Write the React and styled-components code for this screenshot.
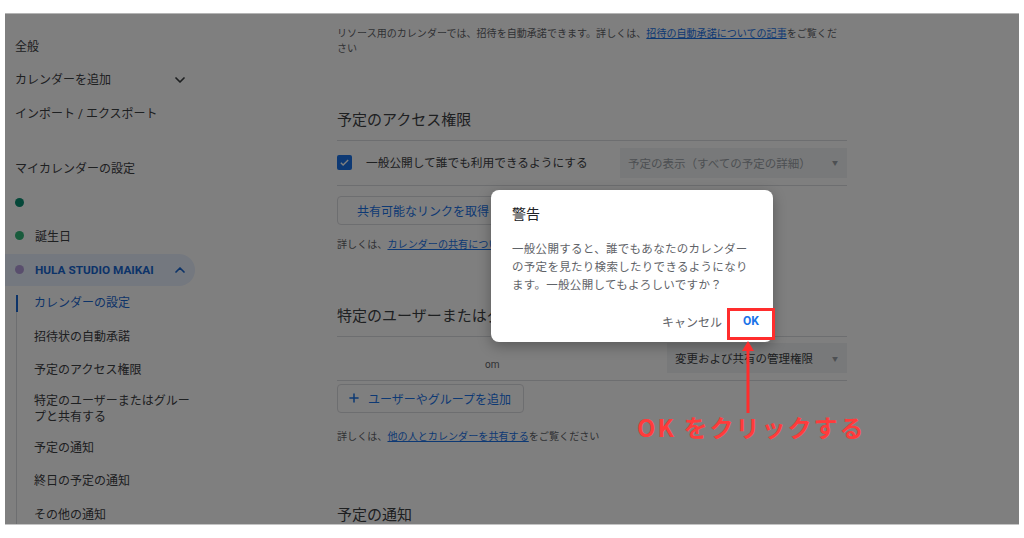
import React from "react";
import styled, { createGlobalStyle } from "styled-components";
import { ChevronDown, ChevronUp, Plus } from "lucide-react";

const GlobalStyle = createGlobalStyle`
  html, body { margin: 0; padding: 0; background: #fff; }
  body { font-family: Roboto, "Noto Sans CJK JP", sans-serif; }
`;

const Page = styled.div`
  padding: 13px 5px 13px 5px;
  background: #fff;
`;

const Screen = styled.div`
  position: relative;
  width: 1014px;
  height: 510px;
  overflow: hidden;
  background: #fff;
  display: flex;
  border-top: 1px solid #b4b4b4;
  border-bottom: 1px solid #c4c4c4;
`;

// ---------- sidebar ----------
const Sidebar = styled.nav`
  width: 332px;
  flex: none;
  padding-top: 16px;
  box-sizing: border-box;
  color: #3c4043;
  font-size: 12px;
`;

const NavItem = styled.div`
  width: 190px;
  height: 33.5px;
  box-sizing: border-box;
  display: flex;
  align-items: center;
  justify-content: space-between;
  padding: 0 7px 0 10px;
  margin-top: ${(p) => p.$mt || 0}px;
  line-height: 16px;
`;

const CalRow = styled.div`
  width: 190px;
  height: ${(p) => (p.$active ? "32px" : "33.5px")};
  margin: ${(p) => (p.$active ? "1px 0" : "0")};
  box-sizing: border-box;
  display: flex;
  align-items: center;
  gap: 11px;
  padding: 0 7px 0 10px;
  border-radius: 0 16px 16px 0;
  background: ${(p) => (p.$active ? "#e8f0fe" : "transparent")};
  color: ${(p) => (p.$active ? "#1967d2" : "#3c4043")};
  font-weight: ${(p) => (p.$active ? 700 : 400)};
  font-size: ${(p) => (p.$active ? "11.8px" : "12px")};
`;

const Dot = styled.span`
  width: 9px;
  height: 9px;
  border-radius: 50%;
  flex: none;
  background: ${(p) => p.$color};
`;

const CalName = styled.span`
  flex: 1;
`;

const SubList = styled.div`
  position: relative;
  margin-left: 11px;
  &::before {
    content: "";
    position: absolute;
    left: 0;
    top: 9px;
    bottom: 0;
    width: 1px;
    background: #dadce0;
  }
`;

const SubItem = styled.div`
  position: relative;
  min-height: 33.5px;
  box-sizing: border-box;
  display: flex;
  align-items: center;
  padding: 6px 0 6px 18px;
  line-height: 16px;
  color: ${(p) => (p.$active ? "#1967d2" : "#3c4043")};
  &::before {
    content: "";
    display: ${(p) => (p.$active ? "block" : "none")};
    position: absolute;
    left: -0.5px;
    top: 8px;
    bottom: 8px;
    width: 2px;
    background: #1967d2;
  }
`;

// ---------- main ----------
const Main = styled.main`
  width: 510px;
  flex: none;
  padding-top: 12px;
  color: #3c4043;
  font-size: 12px;
`;

const Note = styled.p`
  margin: ${(p) => p.$mt || 0}px 0 0;
  font-size: ${(p) => p.$size || 10.05}px;
  line-height: 15px;
  color: #5f6368;
  white-space: nowrap;
`;

const Link = styled.a`
  color: #1a73e8;
  text-decoration: underline;
`;

const SectionTitle = styled.h2`
  margin: ${(p) => p.$mt}px 0 0;
  padding-bottom: 10px;
  border-bottom: 1px solid #dadce0;
  font-size: 15px;
  font-weight: 400;
  line-height: 20px;
  color: #3c4043;
`;

const Row = styled.div`
  height: ${(p) => p.$h}px;
  display: flex;
  align-items: center;
  border-bottom: 1px solid #dadce0;
`;

const Checkbox = styled.span`
  width: 15px;
  height: 15px;
  border-radius: 2px;
  background: #1a73e8;
  display: flex;
  align-items: center;
  justify-content: center;
  flex: none;
`;

const CheckLabel = styled.span`
  margin-left: 14px;
  font-size: 11.7px;
  line-height: 16px;
  color: #3c4043;
`;

const Select = styled.div`
  margin-left: auto;
  width: ${(p) => p.$w}px;
  height: 30px;
  box-sizing: border-box;
  display: flex;
  align-items: center;
  justify-content: space-between;
  padding: 0 9px 0 8px;
  background: #f1f3f4;
  font-size: 11.5px;
  color: ${(p) => (p.$disabled ? "#9aa0a6" : "#3c4043")};
`;

const Caret = styled.span`
  font-size: 6px;
  color: #9aa0a6;
`;

const UserInfo = styled.div`
  padding-left: 148px;
  font-size: 10px;
  line-height: 14px;
  color: #5f6368;
  display: flex;
  flex-direction: column;
`;

const OutlineButton = styled.button`
  margin-top: ${(p) => p.$mt}px;
  height: 29px;
  display: flex;
  align-items: center;
  gap: 7px;
  padding: ${(p) => (p.$icon ? "0 12px 0 9px" : "0 19px")};
  background: #fff;
  border: 1px solid #dadce0;
  border-radius: 4px;
  color: #1a73e8;
  font-family: Roboto, "Noto Sans CJK JP", sans-serif;
  font-size: 12px;
`;

// ---------- overlay / dialog ----------
const Scrim = styled.div`
  position: absolute;
  inset: 0;
  background: rgba(0, 0, 0, 0.5);
`;

const Dialog = styled.div`
  position: absolute;
  left: 486px;
  top: 176px;
  width: 282px;
  height: 152px;
  box-sizing: border-box;
  padding: 14px 6px 0 21px;
  background: #fff;
  border-radius: 8px;
  box-shadow: 0 4px 14px rgba(0, 0, 0, 0.3);
`;

const DialogTitle = styled.div`
  font-size: 14px;
  line-height: 20px;
  color: #202124;
`;

const DialogBody = styled.div`
  margin-top: 16px;
  font-size: 11.5px;
  letter-spacing: 0.3px;
  line-height: 18px;
  color: #5f6368;
  white-space: nowrap;
`;

const DialogActions = styled.div`
  margin-top: 12px;
  display: flex;
  justify-content: flex-end;
  gap: 5px;
`;

const TextButton = styled.button`
  height: 30px;
  padding: 0 8px;
  border: none;
  background: transparent;
  font-family: Roboto, "Noto Sans CJK JP", sans-serif;
  font-size: 12px;
  font-weight: ${(p) => (p.$primary ? 700 : 400)};
  color: ${(p) => (p.$primary ? "#1a73e8" : "#5f6368")};
`;

// ---------- annotation ----------
const Highlight = styled.div`
  position: absolute;
  left: 722px;
  top: 294px;
  width: 48px;
  height: 32px;
  box-sizing: border-box;
  border: 3px solid #ff2d2d;
`;

const ArrowWrap = styled.svg`
  position: absolute;
  left: 737px;
  top: 327px;
`;

const Callout = styled.div`
  position: absolute;
  left: 632px;
  top: 398px;
  font-family: "Noto Sans CJK JP", sans-serif;
  font-size: 24px;
  font-weight: 700;
  letter-spacing: 2px;
  line-height: 30px;
  color: #ff3b3b;
  white-space: nowrap;
`;

const subItems = [
  { label: "カレンダーの設定", active: true },
  { label: "招待状の自動承諾" },
  { label: "予定のアクセス権限" },
  { label: ["特定のユーザーまたはグルー", "プと共有する"] },
  { label: "予定の通知" },
  { label: "終日の予定の通知" },
  { label: "その他の通知" },
];

export default function App() {
  return (
    <Page>
      <GlobalStyle />
      <Screen>
        <Sidebar>
          <NavItem>全般</NavItem>
          <NavItem>
            カレンダーを追加
            <ChevronDown size={16} strokeWidth={2.6} color="#3c4043" />
          </NavItem>
          <NavItem>インポート / エクスポート</NavItem>
          <NavItem $mt={21.5}>マイカレンダーの設定</NavItem>
          <CalRow>
            <Dot $color="#0b8f72" />
          </CalRow>
          <CalRow>
            <Dot $color="#33b679" />
            <CalName>誕生日</CalName>
          </CalRow>
          <CalRow $active>
            <Dot $color="#b39ddb" />
            <CalName>HULA STUDIO MAIKAI</CalName>
            <ChevronUp size={16} strokeWidth={2.6} color="#1967d2" />
          </CalRow>
          <SubList>
            {subItems.map((it, i) => (
              <SubItem key={i} $active={it.active}>
                {Array.isArray(it.label) ? (
                  <span>
                    {it.label[0]}
                    <br />
                    {it.label[1]}
                  </span>
                ) : (
                  it.label
                )}
              </SubItem>
            ))}
          </SubList>
        </Sidebar>

        <Main>
          <Note>
            リソース用のカレンダーでは、招待を自動承諾できます。詳しくは、
            <Link>招待の自動承諾についての記事</Link>をご覧くだ
            <br />
            さい
          </Note>

          <SectionTitle $mt={53.5}>予定のアクセス権限</SectionTitle>
          <Row $h={44}>
            <Checkbox>
              <svg width="11" height="11" viewBox="0 0 24 24">
                <path
                  d="M4 12.5l5 5L20 6.5"
                  fill="none"
                  stroke="#fff"
                  strokeWidth="3"
                />
              </svg>
            </Checkbox>
            <CheckLabel>一般公開して誰でも利用できるようにする</CheckLabel>
            <Select $w={227} $disabled>
              予定の表示（すべての予定の詳細）
              <Caret>▼</Caret>
            </Select>
          </Row>
          <OutlineButton $mt={10}>共有可能なリンクを取得</OutlineButton>
          <Note $mt={12.5} $size={10.1}>
            詳しくは、<Link>カレンダーの共有について</Link>
          </Note>

          <SectionTitle $mt={53.5}>
            特定のユーザーまたはグループと共有する
          </SectionTitle>
          <Row $h={43}>
            <UserInfo>
              <span>&nbsp;</span>
              <span>om</span>
            </UserInfo>
            <Select $w={180}>
              変更および共有の管理権限
              <Caret>▼</Caret>
            </Select>
          </Row>
          <OutlineButton $mt={3} $icon>
            <Plus size={14} strokeWidth={2.6} color="#1a73e8" />
            ユーザーやグループを追加
          </OutlineButton>
          <Note $mt={16.5} $size={10.1}>
            詳しくは、<Link>他の人とカレンダーを共有する</Link>をご覧ください
          </Note>

          <SectionTitle $mt={60.5}>予定の通知</SectionTitle>
        </Main>

        <Scrim />

        <Dialog>
          <DialogTitle>警告</DialogTitle>
          <DialogBody>
            一般公開すると、誰でもあなたのカレンダー
            <br />
            の予定を見たり検索したりできるようになり
            <br />
            ます。一般公開してもよろしいですか？
          </DialogBody>
          <DialogActions>
            <TextButton>キャンセル</TextButton>
            <TextButton $primary>OK</TextButton>
          </DialogActions>
        </Dialog>

        <Highlight />
        <ArrowWrap width="12" height="72" viewBox="0 0 12 72">
          <polygon points="6,0 0,10 12,10" fill="#ff2d2d" />
          <rect x="4.5" y="8" width="3" height="64" fill="#ff2d2d" />
        </ArrowWrap>
        <Callout>OK をクリックする</Callout>
      </Screen>
    </Page>
  );
}
